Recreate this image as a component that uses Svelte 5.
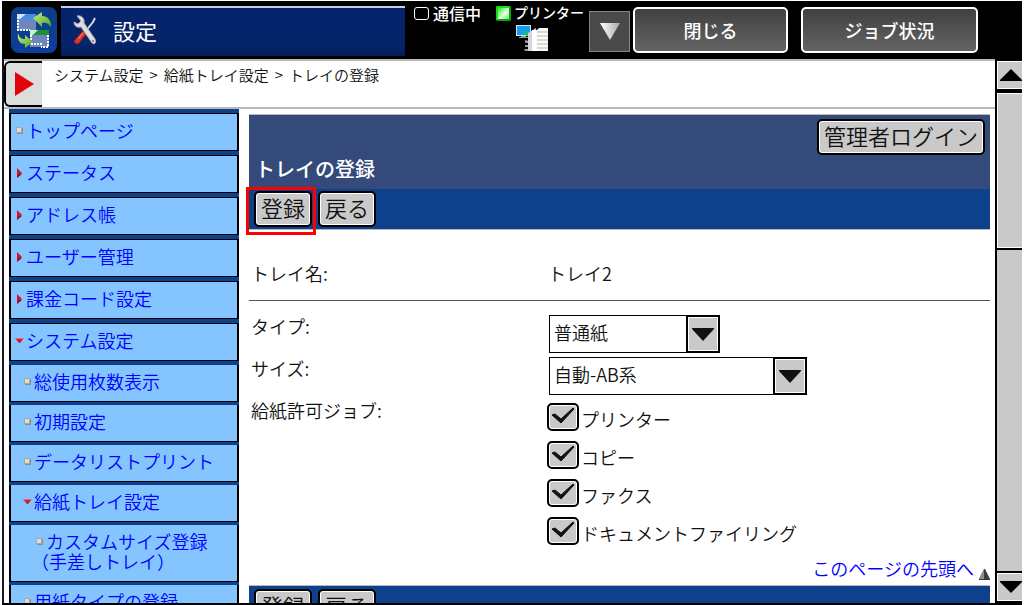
<script>
    let paperType = "普通紙";
    let paperSize = "自動-AB系";

    const paperTypes = ["普通紙", "再生紙", "色紙", "厚紙"];
    const paperSizes = ["自動-AB系", "自動-インチ系", "A4", "B5"];

    const menu = [
        { label: "トップページ", mark: "dot", level: 0 },
        { label: "ステータス", mark: "closed", level: 0 },
        { label: "アドレス帳", mark: "closed", level: 0 },
        { label: "ユーザー管理", mark: "closed", level: 0 },
        { label: "課金コード設定", mark: "closed", level: 0 },
        { label: "システム設定", mark: "open", level: 0 },
        { label: "総使用枚数表示", mark: "dot", level: 1 },
        { label: "初期設定", mark: "dot", level: 1 },
        { label: "データリストプリント", mark: "dot", level: 1 },
        { label: "給紙トレイ設定", mark: "open", level: 1 },
        { label: "カスタムサイズ登録", second: "（手差しトレイ）", mark: "dot", level: 2 },
        { label: "用紙タイプの登録", mark: "dot", level: 1 }
    ];

    let jobs = [
        { id: "printer", label: "プリンター", checked: true },
        { id: "copy", label: "コピー", checked: true },
        { id: "fax", label: "ファクス", checked: true },
        { id: "filing", label: "ドキュメントファイリング", checked: true }
    ];
</script>

<style>
    :global(body) {
        background: white;
    }

    .Screen {
        display: flex;
        flex-direction: column;
        box-sizing: border-box;
        height: 100vh;
        padding: 1px 3px 0 2px;
        overflow: hidden;
        font-family: "Noto Sans CJK JP", sans-serif;
        font-weight: 350;
        font-size: 18px;
        line-height: 20px;
        color: #111;
    }

    button {
        font: inherit;
        box-sizing: border-box;
        margin: 0;
        padding: 0;
        cursor: pointer;
    }

    svg {
        display: block;
    }

    a {
        color: #0000ff;
        text-decoration: none;
    }

    /* top bar */
    .TopBar {
        display: flex;
        flex: none;
        height: 58px;
        box-sizing: border-box;
        padding: 5px 44px 3px 9px;
        background: black;
        color: white;
    }

    .Switch {
        width: 46px;
        height: 46px;
        margin-top: 1px;
        border: 0;
        border-radius: 8px;
        background: linear-gradient(#103c86, #0b3f9c);
    }

    .TopBar__Title {
        display: flex;
        align-items: center;
        flex: 1;
        margin: 0 0 0 4px;
        padding: 0 0 4px 12px;
        gap: 14px;
        border-top: 2px solid #c3cde4;
        background: linear-gradient(#05246b 80%, #041a5a);
        font-size: 22px;
        font-weight: 400;
    }

    .Status {
        display: flex;
        width: 184px;
        font-weight: 500;
    }

    .Status__Line {
        display: flex;
        gap: 4px;
        margin-left: 9px;
        font-size: 16px;
        line-height: 14px;
    }

    .Status__Box {
        box-sizing: border-box;
        width: 15px;
        height: 13px;
        margin-top: 1px;
        border: 1px solid white;
        border-radius: 3px;
    }

    .Status__Printer {
        display: flex;
        gap: 3px;
        margin-left: 15px;
        font-size: 14px;
        line-height: 12px;
    }

    .Status__Led {
        width: 11px;
        height: 11px;
        border: 2px solid #12e012;
        border-right-color: #0aa30a;
        border-bottom-color: #0aa30a;
        border-radius: 2px;
        background: linear-gradient(135deg, #1ee81e, #eaffea 55%, #5df05d);
    }

    .Status__Icon {
        margin: 7px 0 0 2px;
    }

    .Dropdown {
        display: flex;
        align-items: center;
        justify-content: center;
        width: 41px;
        height: 41px;
        margin-top: 5px;
        border: 1px solid #858585;
        background: #4a4a4a;
    }

    .BarButton {
        height: 46px;
        margin: 1px 0 0 3px;
        border: 2px solid white;
        border-radius: 5px;
        background: linear-gradient(#404040, #646464);
        color: white;
        font-weight: 500;
    }

    .BarButton--close {
        width: 155px;
    }

    .BarButton--jobs {
        width: 177px;
        margin-left: 13px;
    }

    /* browser area */
    .Browser {
        display: flex;
        flex: 1;
        min-height: 0;
        border-left: 2px solid #171722;
        border-bottom: 2px solid black;
    }

    .Page {
        display: flex;
        flex-direction: column;
        flex: 1;
        min-width: 0;
        border-top: 2px solid #b9b9b9;
    }

    .Path {
        display: flex;
        flex: none;
        height: 46px;
        border-bottom: 2px solid #b9b9b9;
        font-size: 15px;
    }

    .Path__Toggle {
        width: 38px;
        height: 46px;
        padding-left: 9px;
        border: 2px solid black;
        border-right: 0;
        border-radius: 6px 0 0 6px;
        background: #dcdedc;
    }

    .Path__Items {
        display: flex;
        gap: 6px;
        padding: 4px 0 0 12px;
    }

    .Columns {
        display: flex;
        flex: 1;
        min-height: 0;
        overflow: hidden;
        padding: 0 5px;
        gap: 10px;
    }

    .Menu {
        flex: none;
        width: 230px;
        overflow: hidden;
        background: #0f408b;
    }

    .Menu__List {
        margin: 0;
        padding: 4px 0 0;
        list-style: none;
    }

    .Menu__Item {
        box-sizing: border-box;
        height: 38px;
        margin-bottom: 4px;
        padding: 6px 0 0 4px;
        border: solid black;
        border-width: 1px 2px;
        background: #85c5ff;
    }

    .Menu__Item--1,
    .Menu__Item--2 {
        height: 37px;
        margin-bottom: 3px;
        padding: 6px 0 0 12px;
        border-top: 0;
    }

    .Menu__Item--2 {
        height: 57px;
        padding-left: 24px;
    }

    .Menu__Link {
        display: flex;
        align-items: center;
        gap: 2px;
        white-space: nowrap;
    }

    .Menu__Mark {
        flex: none;
        width: 9px;
        margin-top: 2px;
    }

    .Menu__Second {
        display: block;
        margin-left: -4px;
    }

    .Main {
        flex: 1;
        min-width: 0;
        padding-top: 5px;
    }

    .Heading {
        display: flex;
        justify-content: space-between;
        box-sizing: border-box;
        height: 75px;
        padding: 4px 5px 0 6px;
        border-top: 1px solid #b9b9b9;
        background: #344a7a;
    }

    .Heading__Title {
        align-self: flex-end;
        margin: 0;
        padding-bottom: 8px;
        color: white;
        font-size: 20px;
        font-weight: 500;
        line-height: 24px;
    }

    .PageButton {
        height: 36px;
        padding: 0 5px 4px;
        border: 2px solid black;
        border-radius: 5px;
        background: #c9c9c9;
        box-shadow: inset 0 0 0 1px white;
        color: #111;
        font-size: 22px;
        line-height: 28px;
        white-space: nowrap;
    }

    .Tools {
        display: flex;
        gap: 6px;
        height: 36px;
        padding: 2px 5px;
        background: #0f408b;
        border-bottom: 1px solid #b9b9b9;
    }

    .Tools--bottom {
        padding-top: 3px;
        border-top: 1px solid #b9b9b9;
    }

    .Tools__Marked {
        position: relative;
        display: flex;
    }

    .Tools__Frame {
        position: absolute;
        top: -4px;
        right: -4px;
        bottom: -8px;
        left: -8px;
        border: 3px solid #fd0000;
        pointer-events: none;
    }

    .Row {
        display: flex;
        padding-left: 2px;
    }

    .Row__Label {
        flex: none;
        width: 297px;
        line-height: 22px;
    }

    .Row--name {
        height: 71px;
        box-sizing: border-box;
        padding-top: 32px;
        border-bottom: 1px solid #555;
        margin-bottom: 14px;
        line-height: 22px;
    }

    .Row--select {
        height: 42px;
    }

    .Select {
        position: relative;
        display: flex;
        width: 171px;
        height: 38px;
        margin-left: 1px;
    }

    .Select--wide {
        width: 258px;
    }

    .Select select {
        appearance: none;
        box-sizing: border-box;
        width: 100%;
        padding: 0 34px 5px 4px;
        border: 1px solid black;
        border-radius: 0;
        background: white;
        color: #111;
        font: inherit;
    }

    .Select__Arrow {
        position: absolute;
        top: 0;
        right: 0;
        bottom: 0;
        display: flex;
        align-items: center;
        justify-content: center;
        box-sizing: border-box;
        width: 34px;
        border: 2px solid black;
        background: #c9c9c9;
        box-shadow: inset 0 0 0 1px white;
        pointer-events: none;
    }

    .Jobs {
        padding-top: 4px;
        margin-left: -1px;
    }

    .Job {
        display: flex;
        gap: 2px;
        height: 38px;
        line-height: 32px;
    }

    .Check {
        display: grid;
        width: 32px;
        height: 28px;
    }

    .Check input {
        grid-area: 1 / 1;
        appearance: none;
        box-sizing: border-box;
        width: 32px;
        height: 28px;
        margin: 0;
        border: 2px solid black;
        border-radius: 5px;
        background: #c9c9c9;
        box-shadow: inset 0 0 0 1px white;
    }

    .Check svg {
        grid-area: 1 / 1;
        visibility: hidden;
        pointer-events: none;
    }

    .Check input:checked + svg {
        visibility: visible;
    }

    .ToTop {
        display: flex;
        justify-content: flex-end;
        gap: 5px;
        padding-bottom: 5px;
        margin-top: 3px;
    }

    .ToTop svg {
        margin-top: 11px;
    }

    /* scroll bar */
    .Scroll {
        display: flex;
        flex-direction: column;
        flex: none;
        width: 25px;
        border-left: 2px solid black;
        background: #c9c9c9;
    }

    .Scroll__Button {
        width: 25px;
        height: 32px;
        padding-left: 3px;
        border: solid black;
        border-width: 2px 0;
        background: #c9c9c9;
        box-shadow: inset 1px 1px white, inset 0 -1px white;
    }

    .Scroll__Thumb {
        box-sizing: border-box;
        height: 159px;
        border: solid black;
        border-width: 2px 0;
        box-shadow: inset 1px 1px white, inset 0 -1px white;
    }

    .Scroll__Track {
        flex: 1;
    }
</style>

<div class="Screen">
    <header class="TopBar">
        <button class="Switch" aria-label="画面切替">
            <svg width="46" height="46" viewBox="0 0 46 46">
                <defs>
                    <linearGradient id="leaf" x1="0" y1="0" x2="1" y2="1">
                        <stop offset="0" stop-color="#c6ef7a" />
                        <stop offset="1" stop-color="#4fa52c" />
                    </linearGradient>
                </defs>
                <rect x="6" y="7" width="19" height="16" fill="#6f86bd" />
                <path d="M6 7h19v5H6z" fill="#3d8df2" />
                <path d="M6 7h9l-6 5H6z" fill="#cfe6ff" />
                <path d="M7 13v10h12" fill="none" stroke="white" stroke-width="2" stroke-dasharray="2 1" />
                <path d="M22 11l9-6v4c6 0 9 4 9 11-3-4-5-5-9-4v4z" fill="url(#leaf)" />
                <rect x="19" y="23" width="19" height="17" fill="#6f86bd" />
                <path d="M19 23h19v5H19z" fill="#159136" />
                <path d="M19 23h8l-5 5h-3z" fill="#c9f2ce" />
                <path d="M20 28v9h11M37 28v12h-7" fill="none" stroke="white" stroke-width="2" stroke-dasharray="2 1" />
                <path d="M7 26c1 4 3 6 7 6v-4l8 7-8 6v-4c-6 0-8-5-7-11z" fill="url(#leaf)" />
            </svg>
        </button>
        <h1 class="TopBar__Title">
            <svg width="26" height="32" viewBox="0 0 26 32">
                <path d="M22 4l-2 4-8 10" fill="none" stroke="#d8d8d8" stroke-width="2" />
                <path d="M10 17l3 3-7 9c-2 2-6 0-4-3z" fill="#d9362b" stroke="#a3221b" stroke-width="1" />
                <path d="M5 25l5-6" stroke="#ff9c90" stroke-width="1" />
                <path d="M4 2c4-1 8 2 7 7l11 16c2 4-1 6-3 4L8 13c-4 1-7-1-7-5l4 2 3-3z" fill="#dedede" stroke="#a5a5a5" stroke-width="1" />
                <circle cx="20" cy="27" r="1" fill="#6d6d6d" />
            </svg>
            設定
        </h1>
        <div class="Status">
            <div class="Status__Line"><span class="Status__Box"></span>通信中</div>
            <div class="Status__Printer">
                <span class="Status__Led"></span>
                <div>
                    プリンター
                    <svg class="Status__Icon" width="33" height="27" viewBox="0 0 33 27">
                        <path d="M0 0h15v11H0z" fill="#d8e5ee" />
                        <path d="M1 1h13v9H1z" fill="#159df1" />
                        <path d="M5 11h5v1h3v1H3v-1h2z" fill="#8f9da8" />
                        <path d="M8 6l3 4 3-2" fill="none" stroke="#16d326" stroke-width="2" />
                        <path d="M9 15l4 1v2H9zM9 20h4v2H9zM8 24h5v2H9z" fill="#999" />
                        <path d="M12 8l8-5v23h-8z" fill="#d3d6da" />
                        <path d="M16 5h5v21h-5z" fill="white" />
                        <path d="M20 6l3-3h9v23H20z" fill="#fafafa" />
                        <path d="M21 7h11M21 11h11M21 15h11M21 19h11M21 23h11" stroke="#b5b5b5" stroke-width="1" />
                    </svg>
                </div>
            </div>
        </div>
        <button class="Dropdown" aria-label="ジョブ選択">
            <svg width="20" height="17" viewBox="0 0 20 17">
                <defs>
                    <linearGradient id="silver">
                        <stop offset="0" stop-color="white" />
                        <stop offset="1" stop-color="#aaa" />
                    </linearGradient>
                </defs>
                <path d="M0 0h20L10 17z" fill="url(#silver)" />
            </svg>
        </button>
        <button class="BarButton BarButton--close">閉じる</button>
        <button class="BarButton BarButton--jobs">ジョブ状況</button>
    </header>

    <div class="Browser">
        <div class="Page">
            <div class="Path">
                <button class="Path__Toggle" aria-label="メニューを開く">
                    <svg width="20" height="24" viewBox="0 0 20 24">
                        <path d="M0 0l19 12L0 24z" fill="#e2050c" />
                    </svg>
                </button>
                <div class="Path__Items">
                    <span>システム設定</span><span>&gt;</span><span>給紙トレイ設定</span><span>&gt;</span><span>トレイの登録</span>
                </div>
            </div>

            <div class="Columns">
                <nav class="Menu">
                    <ul class="Menu__List">
                        {#each menu as item}
                            <li class="Menu__Item Menu__Item--{item.level}">
                                <a class="Menu__Link" href="#menu">
                                    <svg class="Menu__Mark" width="9" height="10" viewBox="0 0 9 10">
                                        {#if item.mark === "dot"}
                                            <path d="M2 2h6v6H2z" fill="#8c8c8c" />
                                            <path d="M1 1h6v6H1z" fill="#a9a9a9" />
                                            <path d="M2 2h4v4H2z" fill="#dedbd5" />
                                        {:else if item.mark === "closed"}
                                            <path d="M2 0l5 5-5 5z" fill="#cf1430" />
                                            <path d="M3 6h4L2 10z" fill="#8a1226" />
                                        {:else}
                                            <path d="M0 2h9L5 7H4z" fill="#d3183a" />
                                            <path d="M0 2h9v1H1z" fill="#ef6b78" />
                                        {/if}
                                    </svg>
                                    <span>{item.label}</span>
                                </a>
                                {#if item.second}
                                    <a class="Menu__Second" href="#menu">{item.second}</a>
                                {/if}
                            </li>
                        {/each}
                    </ul>
                </nav>

                <main class="Main" id="top">
                    <div class="Heading">
                        <h2 class="Heading__Title">トレイの登録</h2>
                        <button class="PageButton">管理者ログイン</button>
                    </div>
                    <div class="Tools">
                        <div class="Tools__Marked">
                            <button class="PageButton">登録</button>
                            <span class="Tools__Frame"></span>
                        </div>
                        <button class="PageButton">戻る</button>
                    </div>

                    <div class="Row Row--name">
                        <span class="Row__Label">トレイ名:</span>
                        <span>トレイ2</span>
                    </div>
                    <div class="Row Row--select">
                        <label class="Row__Label" for="type">タイプ:</label>
                        <div class="Select">
                            <select id="type" bind:value={paperType}>
                                {#each paperTypes as type}
                                    <option>{type}</option>
                                {/each}
                            </select>
                            <span class="Select__Arrow">
                                <svg width="22" height="13" viewBox="0 0 22 13"><path d="M0 0h22v1L11 13 0 1z" fill="#111" /></svg>
                            </span>
                        </div>
                    </div>
                    <div class="Row Row--select">
                        <label class="Row__Label" for="size">サイズ:</label>
                        <div class="Select Select--wide">
                            <select id="size" bind:value={paperSize}>
                                {#each paperSizes as size}
                                    <option>{size}</option>
                                {/each}
                            </select>
                            <span class="Select__Arrow">
                                <svg width="22" height="13" viewBox="0 0 22 13"><path d="M0 0h22v1L11 13 0 1z" fill="#111" /></svg>
                            </span>
                        </div>
                    </div>
                    <div class="Row">
                        <span class="Row__Label">給紙許可ジョブ:</span>
                        <div class="Jobs">
                            {#each jobs as job}
                                <div class="Job">
                                    <span class="Check">
                                        <input type="checkbox" id={job.id} bind:checked={job.checked}>
                                        <svg width="32" height="28" viewBox="0 0 32 28">
                                            <path d="M5 12l3-1 6 5L26 5l1 1-13 14z" fill="#111" stroke="#111" stroke-width="1" />
                                        </svg>
                                    </span>
                                    <label for={job.id}>{job.label}</label>
                                </div>
                            {/each}
                        </div>
                    </div>
                    <div class="ToTop">
                        <a href="#top">このページの先頭へ</a>
                        <svg width="11" height="11" viewBox="0 0 11 11">
                            <path d="M5 0h1l5 10v1H0v-1z" fill="#3d3d3d" />
                            <path d="M5 0L0 10h5z" fill="#8f8f8f" />
                        </svg>
                    </div>
                    <div class="Tools Tools--bottom">
                        <button class="PageButton">登録</button>
                        <button class="PageButton">戻る</button>
                    </div>
                </main>
            </div>
        </div>

        <div class="Scroll">
            <button class="Scroll__Button" aria-label="上へ">
                <svg width="22" height="12" viewBox="0 0 22 12"><path d="M11 0l11 11v1H0v-1z" /></svg>
            </button>
            <div class="Scroll__Thumb"></div>
            <div class="Scroll__Track"></div>
            <button class="Scroll__Button" aria-label="下へ">
                <svg width="22" height="12" viewBox="0 0 22 12"><path d="M0 0h22v1L11 12 0 1z" /></svg>
            </button>
        </div>
    </div>
</div>
